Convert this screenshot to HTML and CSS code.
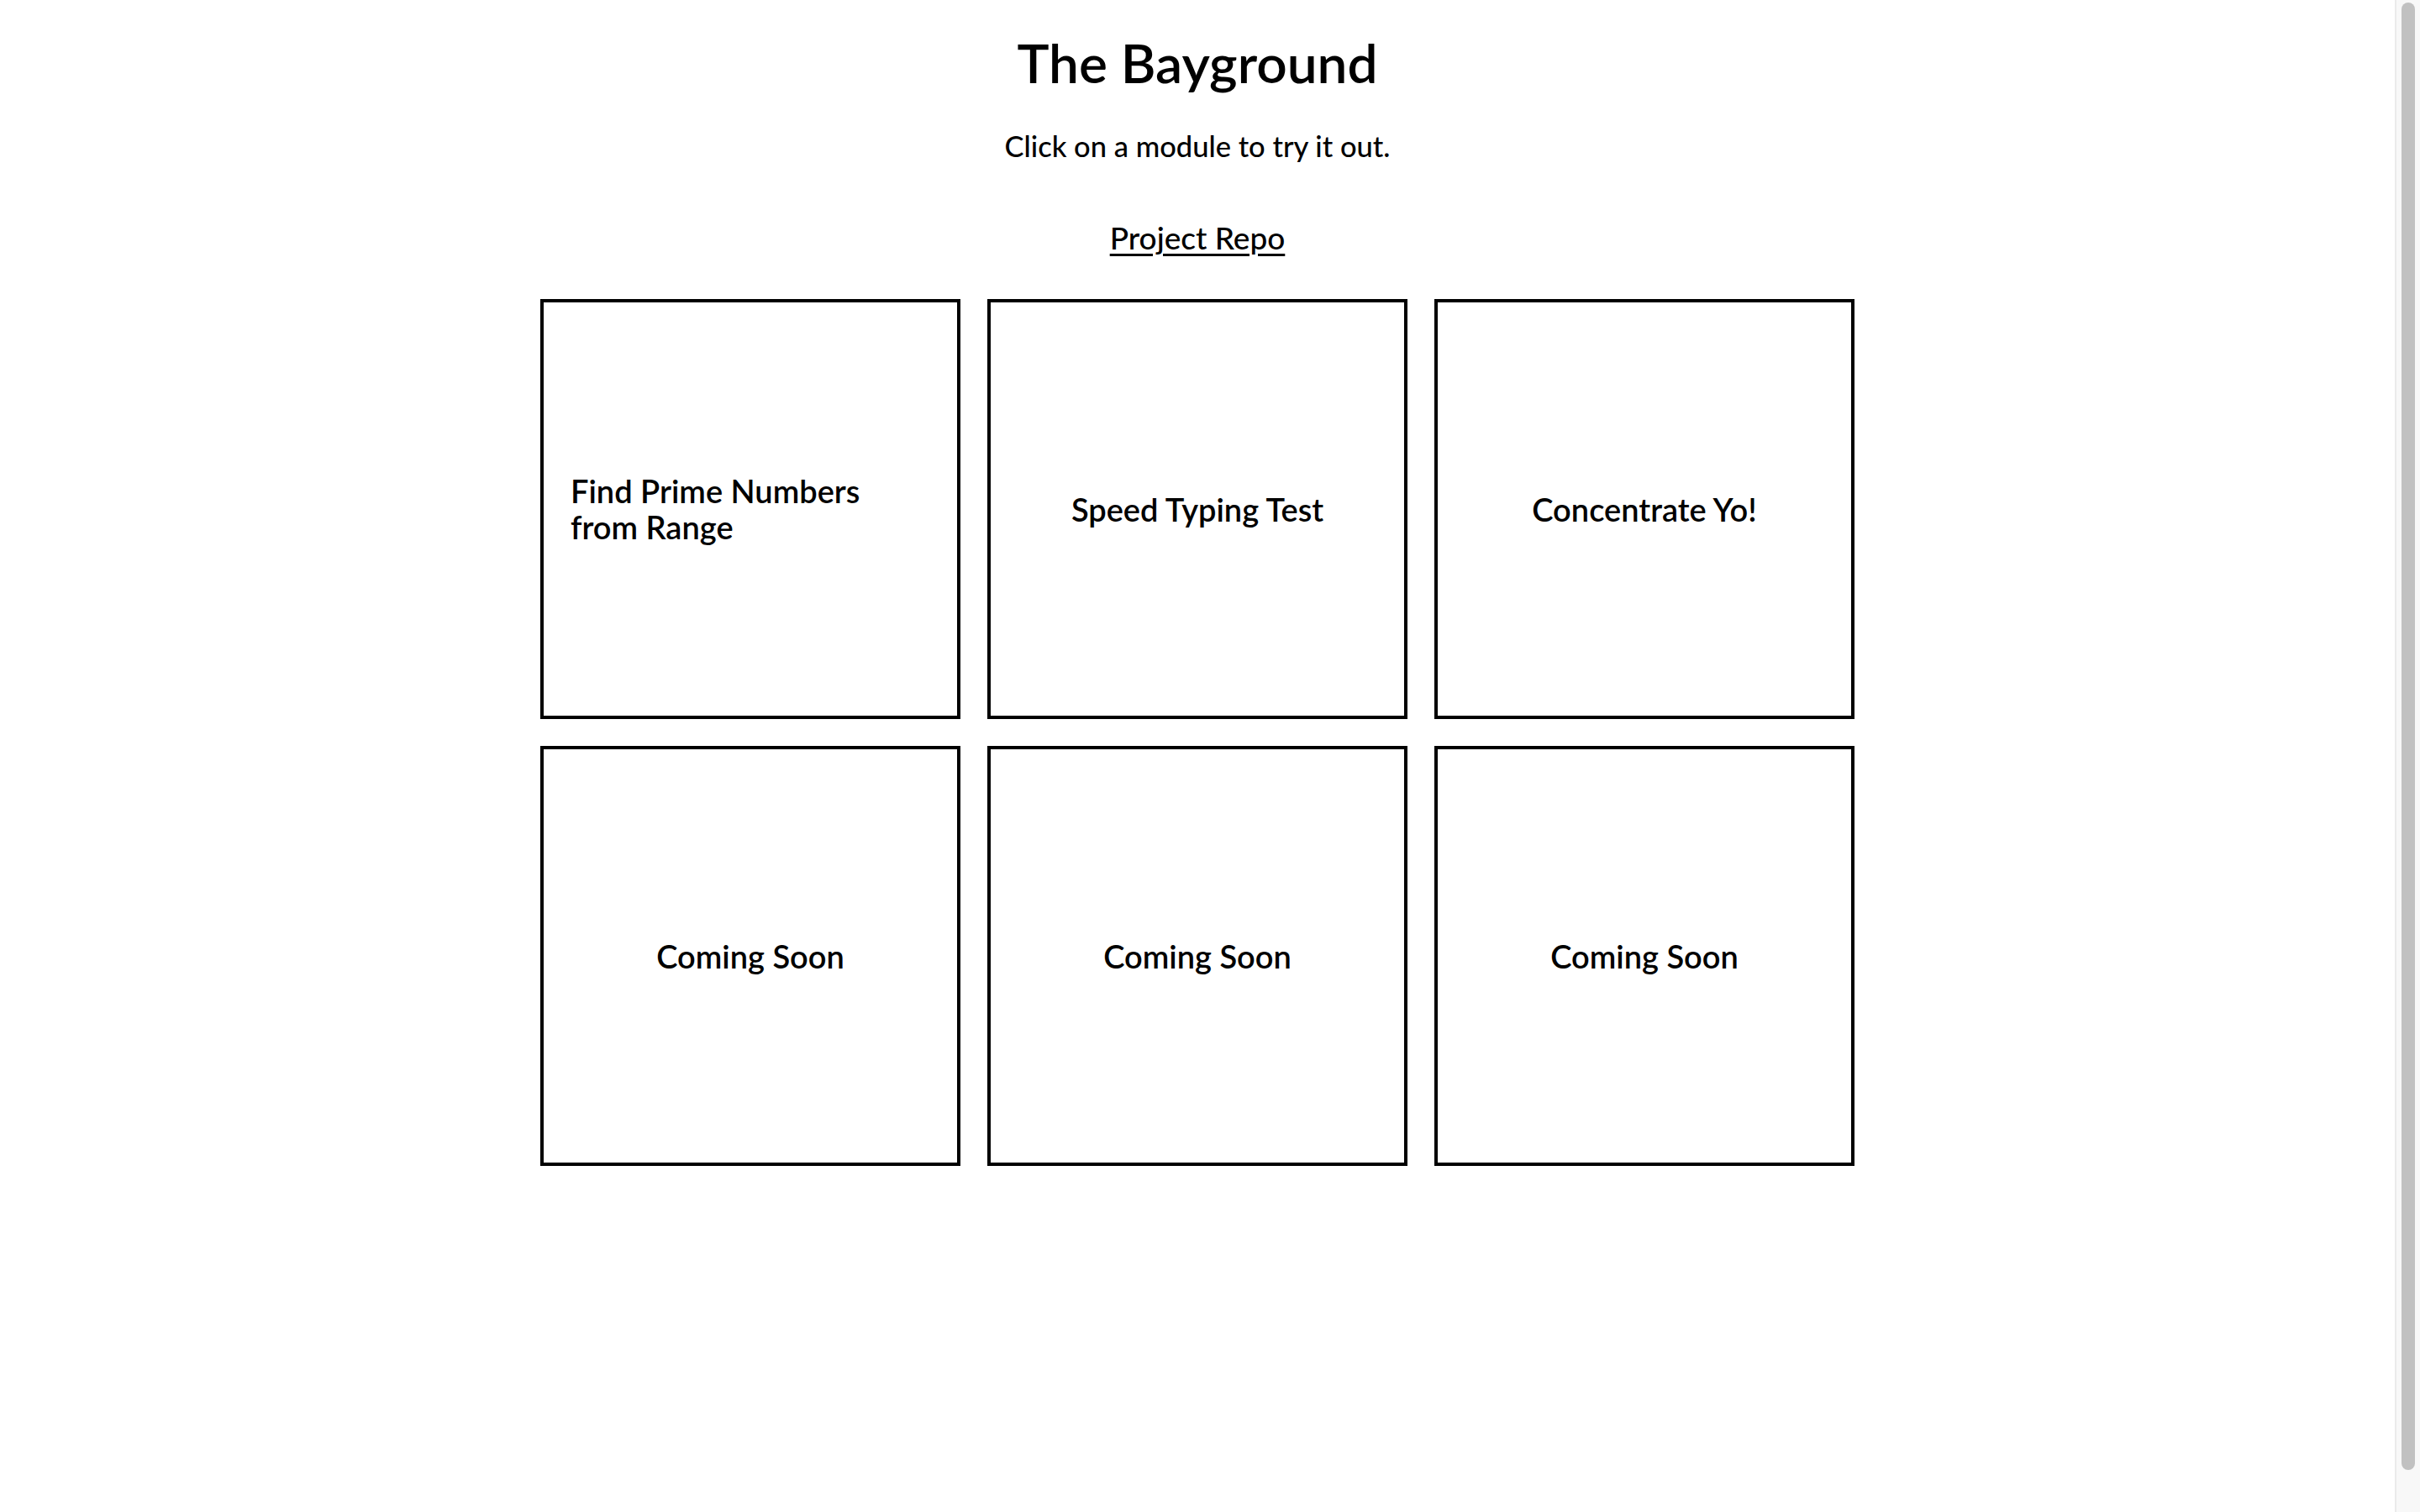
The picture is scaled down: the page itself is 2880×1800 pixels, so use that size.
FILE: index.html
```html
<!DOCTYPE html>
<html lang="en">
<head>
<meta charset="utf-8">
<title>The Bayground</title>
<link rel="stylesheet" href="styles.css">
</head>
<body class="window">
<main class="page">
  <h1 class="title">The Bayground</h1>
  <p class="subtitle">Click on a module to try it out.</p>
  <a class="repo" href="#">Project Repo</a>
  <div class="grid">
    <a class="card" href="#"><span class="card-label">Find Prime Numbers from Range</span></a>
    <a class="card" href="#"><span class="card-label">Speed Typing Test</span></a>
    <a class="card" href="#"><span class="card-label">Concentrate Yo!</span></a>
    <a class="card" href="#"><span class="card-label">Coming Soon</span></a>
    <a class="card" href="#"><span class="card-label">Coming Soon</span></a>
    <a class="card" href="#"><span class="card-label">Coming Soon</span></a>
  </div>
</main>
<div class="scrollbar" aria-hidden="true"><div class="scrollbar-thumb"></div></div>
</body>
</html>
```

FILE: styles.css
```css
html {
  height: 100%;
}

.window {
  margin: 0;
  height: 100vh;
  overflow: hidden;
  display: flex;
  background: #ffffff;
  color: #000000;
  font-family: Lato, "Open Sans", sans-serif;
}

.page {
  flex: 1;
  min-width: 0;
  padding: 16px;
  display: flex;
  flex-direction: column;
  align-items: center;
}

.title {
  margin: 17px 0 0;
  font-size: 64px;
  font-weight: 600;
  line-height: 84px;
}

.subtitle {
  margin: 36px 0 0;
  font-size: 34.5px;
  font-weight: 500;
  line-height: 42px;
}

.repo {
  margin-top: 65px;
  font-size: 37px;
  font-weight: 500;
  line-height: 46px;
  color: #000000;
  text-decoration: underline;
  text-decoration-thickness: 3px;
  text-underline-offset: 5px;
}

.grid {
  margin-top: 50px;
  display: grid;
  grid-template-columns: repeat(3, 500px);
  grid-auto-rows: 500px;
  gap: 32px;
}

.card {
  box-sizing: border-box;
  display: flex;
  align-items: center;
  justify-content: center;
  padding: 0 32px;
  border: 4px solid #000000;
  color: #000000;
  text-decoration: none;
  font-size: 38px;
  line-height: 43px;
  font-weight: 600;
}

.scrollbar {
  flex: none;
  box-sizing: border-box;
  width: 30px;
  height: 100%;
  padding: 3px 6px 50px 6px;
  background: #f8f8f8;
  border-left: 2px solid #ebebeb;
  display: flex;
}

.scrollbar-thumb {
  flex: 1;
  background: #c1c1c1;
  border-radius: 8px;
}
```
